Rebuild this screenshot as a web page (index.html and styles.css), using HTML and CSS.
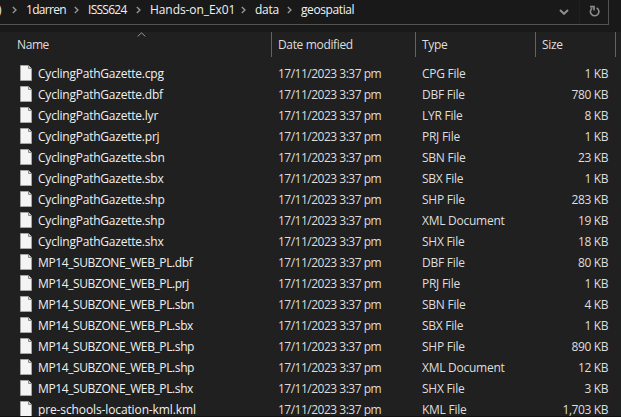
FILE: index.html
```html
<!DOCTYPE html>
<html lang="en">
<head>
<meta charset="utf-8">
<title>geospatial</title>
<link rel="stylesheet" href="styles.css">
</head>
<body>
<header class="toolbar">
  <nav class="address">
    <span class="crumb c-cut">)</span>
    <svg class="sep" viewBox="0 0 5 8"><path d="M.8 1 4 4 .8 7"/></svg>
    <span class="crumb c-user">1darren</span>
    <svg class="sep" viewBox="0 0 5 8"><path d="M.8 1 4 4 .8 7"/></svg>
    <span class="crumb c-course">ISSS624</span>
    <svg class="sep" viewBox="0 0 5 8"><path d="M.8 1 4 4 .8 7"/></svg>
    <span class="crumb c-hands">Hands-on_Ex01</span>
    <svg class="sep" viewBox="0 0 5 8"><path d="M.8 1 4 4 .8 7"/></svg>
    <span class="crumb c-data">data</span>
    <svg class="sep" viewBox="0 0 5 8"><path d="M.8 1 4 4 .8 7"/></svg>
    <span class="crumb c-geo">geospatial</span>
    <svg class="drop" viewBox="0 0 10 6"><path d="M1 1l4 3.8L9 1"/></svg>
    <span class="refresh"><svg viewBox="0 0 11 12"><path d="M7.6 2.9A4.2 4.2 0 1 1 3.2 3.2M1 1.6h4v4"/></svg></span>
  </nav>
</header>
<main>
  <div class="columns">
    <div class="h-name"><span>Name</span><svg class="sort" viewBox="0 0 9 5"><path d="M.7 4.4 4.5.8l3.8 3.6"/></svg></div>
    <div class="h-date">Date modified</div>
    <div class="h-type">Type</div>
    <div class="h-size">Size</div>
  </div>
  <div class="list" id="list"></div>
</main>
<script src="files.js"></script>
</body>
</html>
```
FILE: styles.css
```css
* { box-sizing: border-box; }
body {
  margin: 0;
  width: 621px;
  height: 417px;
  overflow: hidden;
  background: #202020;
  color: #dedede;
  font: 12px "Open Sans", "Noto Sans", sans-serif;
  white-space: nowrap;
}
svg { display: block; fill: none; flex: none; }
.toolbar { height: 32px; background: #191919; }
.address {
  display: flex;
  align-items: center;
  width: 609px;
  height: 25px;
  padding-bottom: 4px;
  border: solid #535353;
  border-width: 0 1px 1px 0;
  color: #f2f2f2;
}
.crumb { flex: none; line-height: 20px; }
.c-cut { width: 12px; text-indent: -2px; }
.c-user { width: 48px; letter-spacing: -.7px; }
.c-course { width: 48px; letter-spacing: -.72px; }
.c-hands { width: 91px; letter-spacing: -.08px; }
.c-data { width: 32px; letter-spacing: -.3px; }
.c-geo { flex: 1; letter-spacing: -.4px; }
.sep { width: 5px; height: 8px; margin-right: 9px; stroke: #999; stroke-width: 1.3; }
.drop { width: 10px; height: 6px; margin: 3px 10px 0 0; stroke: #8e8e8e; stroke-width: 2; }
.refresh { display: flex; width: 29px; height: 24px; margin-top: 4px; padding: 5px 0 0 9px; border-left: 1px solid #202020; }
.refresh svg { width: 11px; height: 12px; stroke: #8e8e8e; stroke-width: 1.6; }
.columns { display: flex; height: 25px; line-height: 25px; }
.columns > div { border-right: 1px solid #636363; letter-spacing: -.35px; }
.columns .h-name { display: flex; width: 272px; padding-left: 17px; letter-spacing: -.4px; }
.h-name span { width: 32px; }
.sort { width: 9px; height: 5px; margin-left: 88px; stroke: #999; }
.h-date { width: 144px; padding-left: 6px; }
.h-type { width: 120px; padding-left: 6px; }
.h-size { width: 80px; padding-left: 6px; }
.list { height: 360px; padding-top: 6px; overflow: hidden; border-bottom: 1px solid #111; }
.row { display: flex; height: 21px; line-height: 22px; }
.icon { width: 12px; height: 16px; margin: 2px 6px 0 20px; }
.name { width: 240px; color: #f0f0f0; }
.cycling { letter-spacing: -.22px; }
.subzone { letter-spacing: -.39px; }
.schools { letter-spacing: -.12px; }
.date { width: 144px; letter-spacing: -.5px; }
.type { width: 106px; letter-spacing: -.26px; }
.size { width: 80px; text-align: right; letter-spacing: -.4px; }
```
FILE: files.js
```js
const files = [
  ["CyclingPathGazette.cpg", "CPG File", "1", "cycling"],
  ["CyclingPathGazette.dbf", "DBF File", "780", "cycling"],
  ["CyclingPathGazette.lyr", "LYR File", "8", "cycling"],
  ["CyclingPathGazette.prj", "PRJ File", "1", "cycling"],
  ["CyclingPathGazette.sbn", "SBN File", "23", "cycling"],
  ["CyclingPathGazette.sbx", "SBX File", "1", "cycling"],
  ["CyclingPathGazette.shp", "SHP File", "283", "cycling"],
  ["CyclingPathGazette.shp", "XML Document", "19", "cycling"],
  ["CyclingPathGazette.shx", "SHX File", "18", "cycling"],
  ["MP14_SUBZONE_WEB_PL.dbf", "DBF File", "80", "subzone"],
  ["MP14_SUBZONE_WEB_PL.prj", "PRJ File", "1", "subzone"],
  ["MP14_SUBZONE_WEB_PL.sbn", "SBN File", "4", "subzone"],
  ["MP14_SUBZONE_WEB_PL.sbx", "SBX File", "1", "subzone"],
  ["MP14_SUBZONE_WEB_PL.shp", "SHP File", "890", "subzone"],
  ["MP14_SUBZONE_WEB_PL.shp", "XML Document", "12", "subzone"],
  ["MP14_SUBZONE_WEB_PL.shx", "SHX File", "3", "subzone"],
  ["pre-schools-location-kml.kml", "KML File", "1,703", "schools"]
];
const icon = '<svg class="icon" viewBox="0 0 12 16"><path d="M.5.5h7.7l3.3 3.3v11.7H.5z" fill="#f4f4f4" stroke="#a5a5a5"/><path d="M8.5.5v3h3" fill="#ddd" stroke="#888"/></svg>';
document.getElementById("list").innerHTML = files.map(([name, type, size, group]) =>
  `<div class="row">${icon}<span class="name ${group}">${name}</span><span class="date">17/11/2023 3:37 pm</span><span class="type">${type}</span><span class="size">${size} KB</span></div>`
).join("");
```
